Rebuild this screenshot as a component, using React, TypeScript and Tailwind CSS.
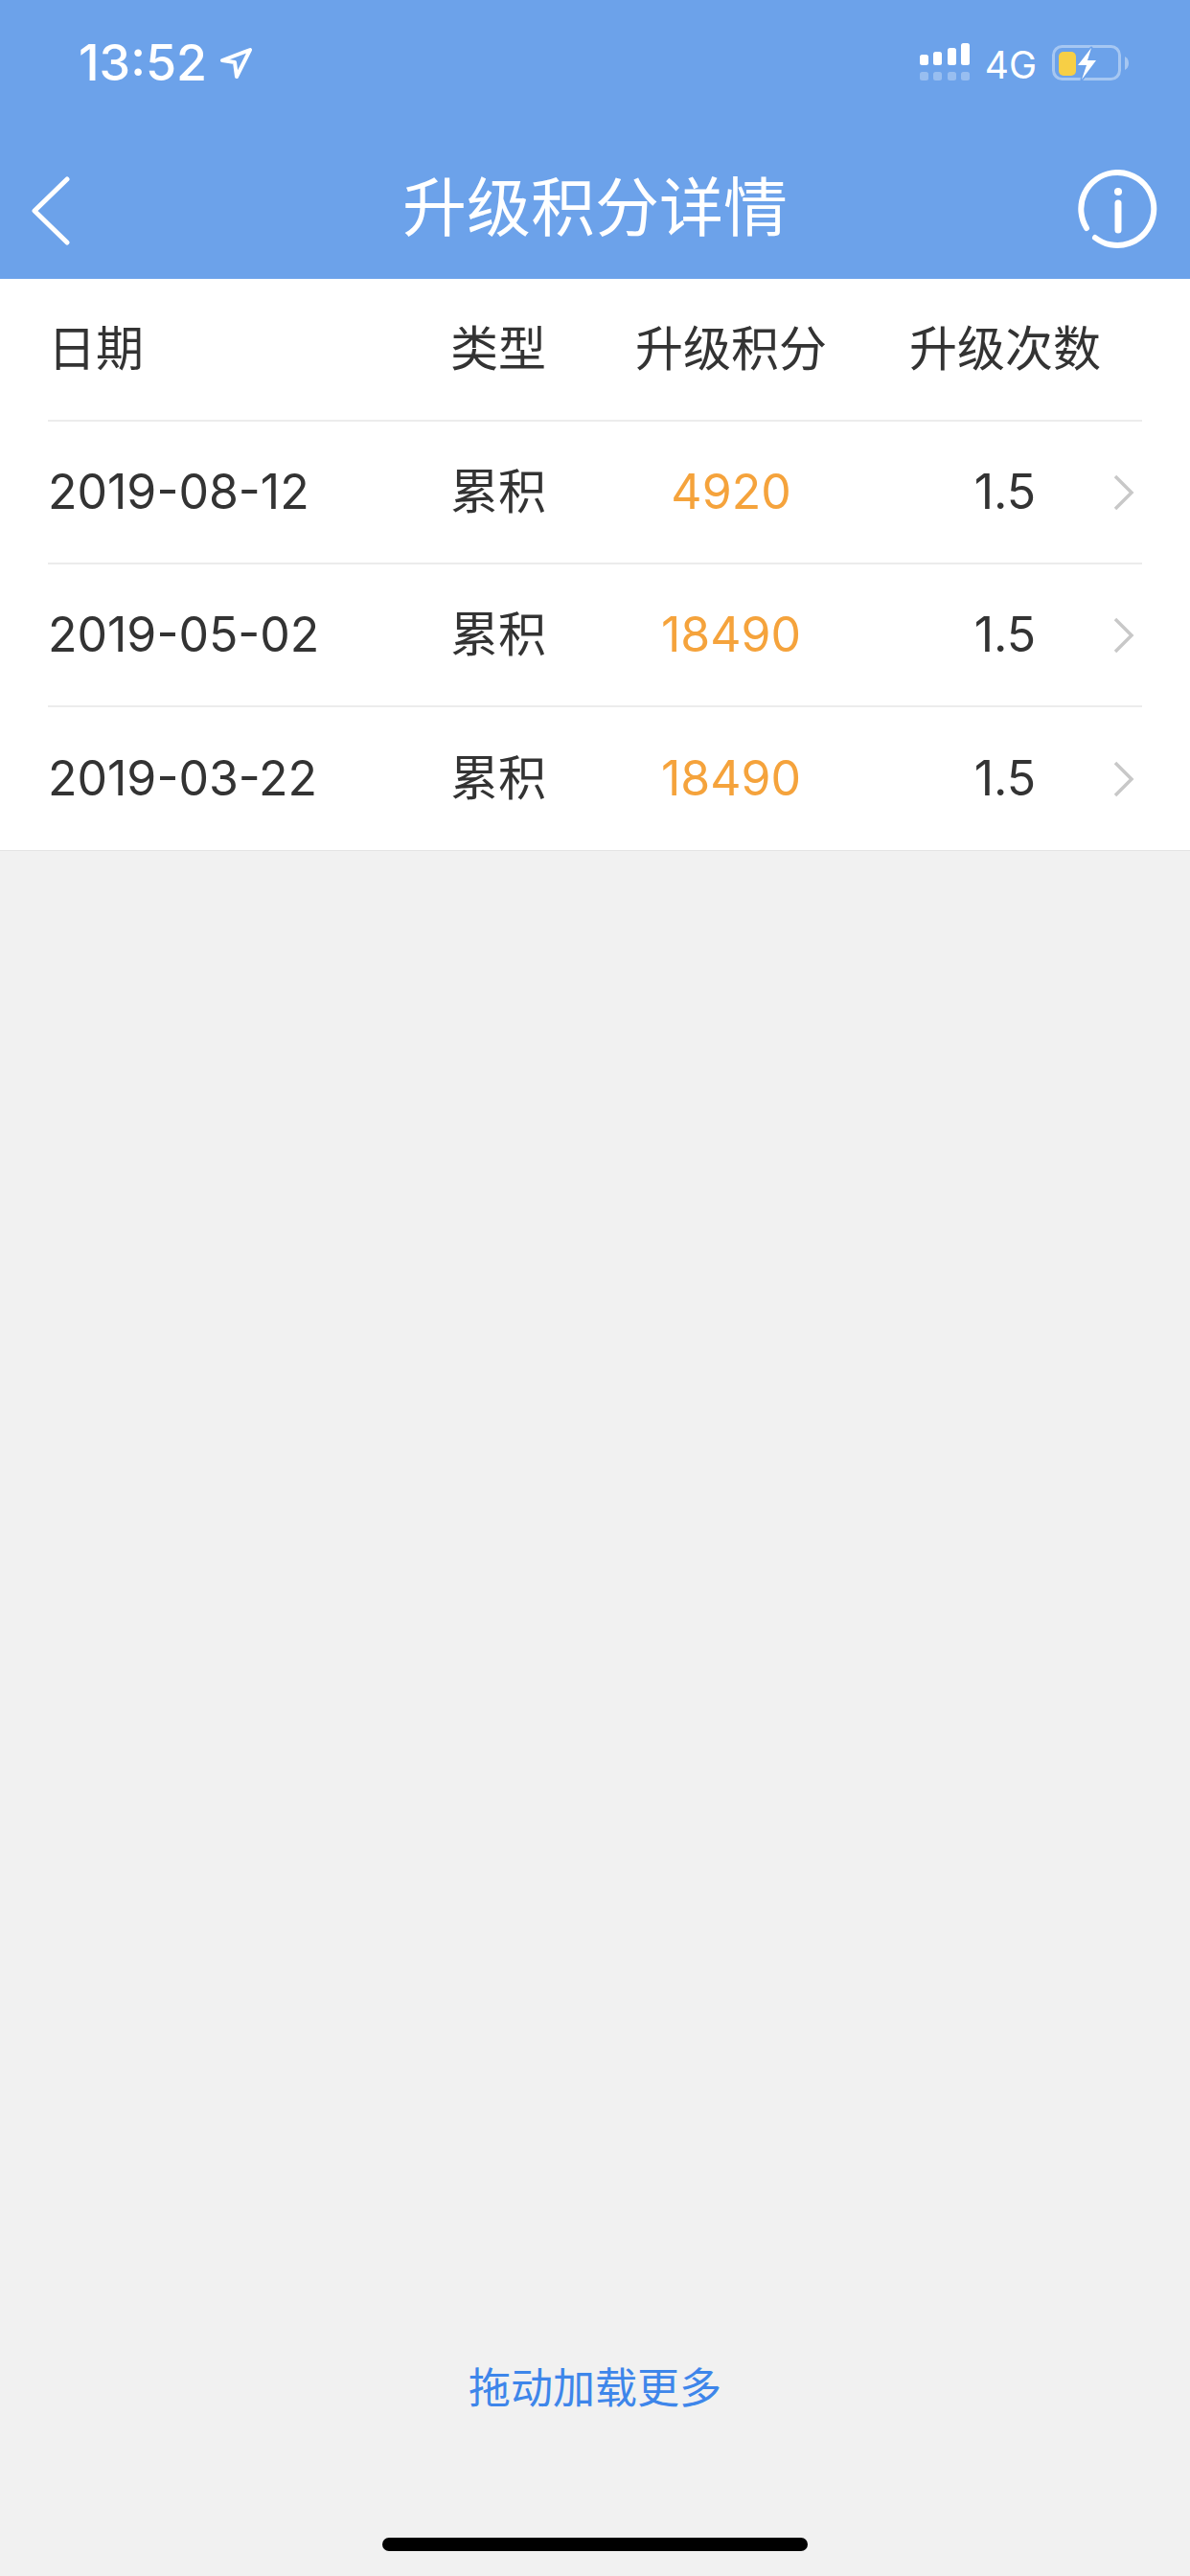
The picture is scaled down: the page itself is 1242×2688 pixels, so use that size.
import React from 'react';

const font = { fontFamily: 'Inter, "Noto Sans CJK SC", sans-serif' };

const rows = [
  { date: '2019-08-12', type: '累积', score: '4920', count: '1.5' },
  { date: '2019-05-02', type: '累积', score: '18490', count: '1.5' },
  { date: '2019-03-22', type: '累积', score: '18490', count: '1.5' },
];

const StatusBar = () => (
  <div className="flex h-[130px] items-start justify-between pl-[82px] pr-[62px] text-white">
    <div className="flex items-start gap-[13px] pt-[35px]">
      <span className="text-[52px] font-medium leading-[62px]">13:52</span>
      <svg width="34" height="36" viewBox="0 0 34 36" fill="none" stroke="white" strokeWidth="4" strokeLinejoin="round" className="mt-[14px]">
        <path d="M3 14 L32 3 L18 31 L16 16 Z" />
      </svg>
    </div>
    <div className="flex items-start gap-[16px]">
      <svg width="52" height="40" viewBox="0 0 52 40" fill="white" className="mt-[45px]">
        <rect x="0" y="12" width="9" height="11" rx="2.5" />
        <rect x="14" y="9" width="9" height="14" rx="2.5" />
        <rect x="29" y="5" width="9" height="18" rx="2.5" />
        <rect x="43" y="0" width="9" height="23" rx="2.5" />
        <g opacity="0.3">
          <rect x="0" y="30" width="9" height="9" rx="2.5" />
          <rect x="14" y="30" width="9" height="9" rx="2.5" />
          <rect x="29" y="30" width="9" height="9" rx="2.5" />
          <rect x="43" y="30" width="9" height="9" rx="2.5" />
        </g>
      </svg>
      <span className="mt-[43px] text-[39px] leading-[50px]">4G</span>
      <svg width="82" height="42" viewBox="0 0 82 42" className="mt-[46px]">
        <rect x="1.500" y="2.500" width="69" height="34" rx="9" fill="none" stroke="white" strokeOpacity="0.4" strokeWidth="3" />
        <path d="M76 13 Q80 15 80 20 Q80 25 76 27 Z" fill="white" fillOpacity="0.4" />
        <rect x="7" y="8" width="18" height="25" rx="5" fill="#f7cf45" />
        <path d="M41 4 L27 22 L36 22 L31 37 L46 17 L37 17 Z" fill="white" stroke="#6ca2ea" strokeWidth="3" paintOrder="stroke" strokeLinejoin="round" />
      </svg>
    </div>
  </div>
);

const NavBar = () => (
  <div className="relative flex h-[161px] items-start justify-between pl-[33px] pr-[33px] pt-[54px]">
    <svg width="40" height="72" viewBox="0 0 40 72" fill="none" stroke="white" strokeWidth="5" strokeLinecap="round" strokeLinejoin="round">
      <path d="M37 3 L3 36 L37 69" />
    </svg>
    <h1 className="absolute inset-x-0 top-[42px] text-center text-[67px] font-normal leading-[90px] text-white">升级积分详情</h1>
    <svg width="84" height="84" viewBox="0 0 84 84" fill="none" stroke="white" strokeWidth="6" strokeLinecap="round" className="-mt-[7px]">
      <path d="M9 61 A38 38 0 1 1 18 71" />
      <path d="M42 35 L42 63" strokeWidth="7" />
      <circle cx="42" cy="23" r="4" fill="white" stroke="none" />
    </svg>
  </div>
);

const Chevron = () => (
  <svg width="22" height="40" viewBox="0 0 22 40" fill="none" stroke="#c8c8c8" strokeWidth="3.500">
    <path d="M2 3 L19 20 L2 37" />
  </svg>
);

export default function App() {
  return (
    <div className="flex min-h-[2688px] flex-col bg-[#f1f1f1] text-[#333333]" style={font}>
      <div className="bg-[#6ca2ea]">
        <StatusBar />
        <NavBar />
      </div>

      <div className="border-b border-[#e4e4e4] bg-white pl-[50px] pr-[50px]">
        <div className="flex h-[149px] items-center border-b-2 border-[#ececec] text-[50px]">
          <span className="w-[400px]">日期</span>
          <span className="w-[140px] text-center">类型</span>
          <span className="w-[346px] text-center">升级积分</span>
          <span className="w-[226px] text-center">升级次数</span>
        </div>
        {rows.map((row, i) => (
          <div key={row.date} className={`flex h-[149px] items-center text-[50px] ${i < rows.length - 1 ? 'border-b-2 border-[#ececec]' : ''}`}>
            <span className="w-[400px]">{row.date}</span>
            <span className="w-[140px] text-center">{row.type}</span>
            <span className="w-[346px] text-center text-[#f5a33c]">{row.score}</span>
            <span className="w-[226px] text-center">{row.count}</span>
            <span className="flex items-center">
              <Chevron />
            </span>
          </div>
        ))}
      </div>

      <div className="flex flex-1 flex-col items-center justify-end">
        <span className="text-[44px] leading-[60px] text-[#3e86ea]">拖动加载更多</span>
        <div className="mb-[26px] mt-[126px] h-[14px] w-[444px] rounded-full bg-black" />
      </div>
    </div>
  );
}
